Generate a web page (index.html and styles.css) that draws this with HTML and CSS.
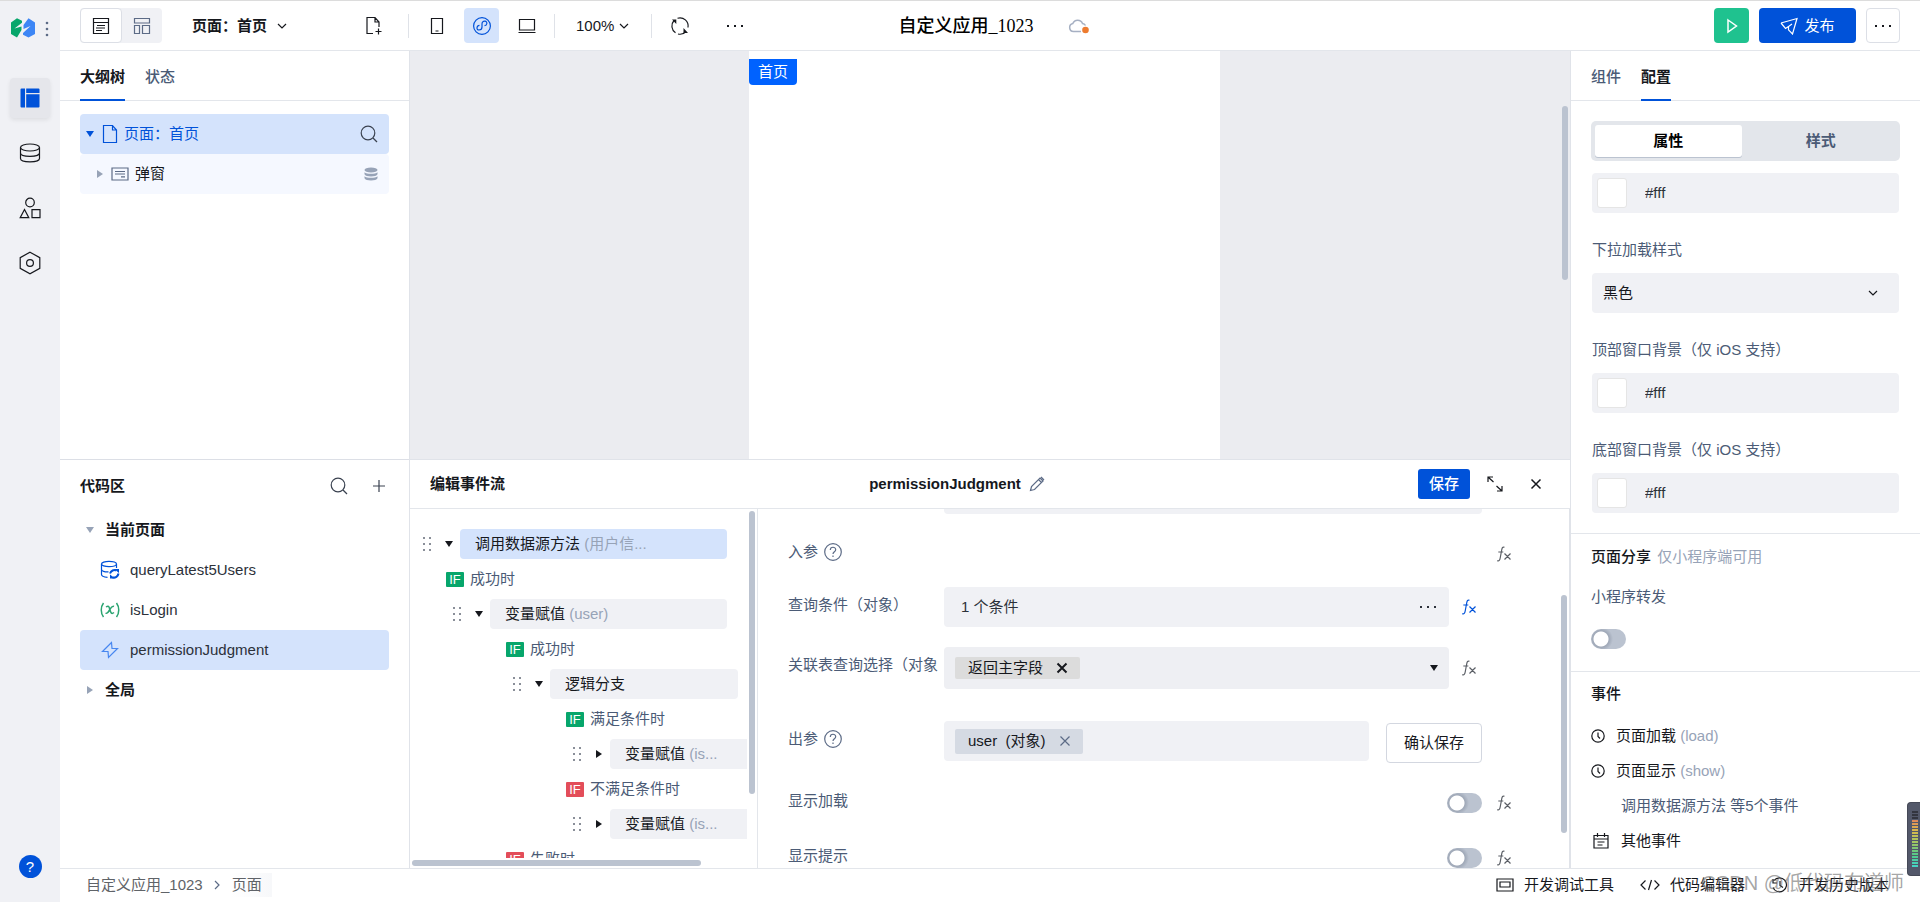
FILE: index.html
```html
<!DOCTYPE html>
<html lang="zh-CN">
<head>
<meta charset="utf-8">
<title>自定义应用_1023</title>
<link rel="stylesheet" href="styles.css">
</head>
<body>
<svg class="sprite" aria-hidden="true">
  <symbol id="i-search" viewBox="0 0 18 18"><circle cx="8" cy="8" r="6.8"/><path d="M13 13l4 4"/></symbol>
  <symbol id="i-chev" viewBox="0 0 10 10"><path d="M1 3l4 4 4-4"/></symbol>
  <symbol id="i-dots" viewBox="0 0 18 4"><path class="solid" d="M1 1h2v2H1zM8 1h2v2H8zM15 1h2v2h-2z"/></symbol>
  <symbol id="i-help" viewBox="0 0 20 20"><circle cx="10" cy="10" r="8.300"/><path d="M7.300 8c0-3.700 5.400-3.500 5.400-.3 0 2-2.700 2-2.700 4.200M10 13.600v1.500"/></symbol>
  <symbol id="i-fx" viewBox="0 0 16 16"><path d="M8.500 1.300C6.500.5 6 2 5.600 4.500L4.200 12c-.4 2.300-1.200 3.200-2.900 2.600M2.300 6h5M8.500 7.500l6 6M14.500 7.500l-6 6"/></symbol>
  <symbol id="i-down" viewBox="0 0 8 6"><path class="solid" d="M0 0h8L4 6z"/></symbol>
  <symbol id="i-right" viewBox="0 0 6 8"><path class="solid" d="M0 0v8l6-4z"/></symbol>
  <symbol id="i-grip" viewBox="0 0 8 16"><path class="solid" d="M0 1h2v2H0zM6 1h2v2H6zM0 7h2v2H0zM6 7h2v2H6zM0 13h2v2H0zM6 13h2v2H6z"/></symbol>
  <symbol id="i-x" viewBox="0 0 12 12"><path d="M1.500 1.500l9 9M10.500 1.500l-9 9"/></symbol>
  <symbol id="i-clock" viewBox="0 0 14 14"><circle cx="7" cy="7" r="6.200"/><path d="M7 3.500V7.500l2 2"/></symbol>
</svg>
<div class="app">
  <nav class="rail" aria-label="主导航">
    <div class="rail-brand">
      <svg width="24" height="20" viewBox="0 0 24 20"><path fill="#07a66b" d="M0 4.500L6 .3l5 2.500v2L3.500 10.500l7-2v3.500L6 19.500 0 16z"/><path fill="#3d86f5" d="M24 4.500L17.500.3 12.500 7v4l7-3-7.500 7v1.800l5.500 2.700 6.500-3.500z"/></svg>
      <svg class="muted" width="4" height="16" viewBox="0 0 4 16"><circle cx="2" cy="2" r="1.300"/><circle cx="2" cy="8" r="1.300"/><circle cx="2" cy="14" r="1.300"/></svg>
    </div>
    <button class="rail-btn is-on" aria-label="页面"><svg width="20" height="20" viewBox="0 0 20 20"><path fill="#0052d9" d="M1.500.5H5v19H1.500a1 1 0 01-1-1v-17a1 1 0 011-1zM6.200.5h12.300a1 1 0 011 1V5H6.200zM6.200 6.200h13.300v12.300a1 1 0 01-1 1H6.200z"/></svg></button>
    <button class="rail-btn" aria-label="数据源"><svg class="ic" width="22" height="20" viewBox="0 0 22 20"><ellipse cx="11" cy="4.500" rx="9.500" ry="3.500"/><path d="M1.500 4.500v11c0 4.500 19 4.500 19 0v-11M1.500 10c0 4.500 19 4.500 19 0"/></svg></button>
    <button class="rail-btn" aria-label="组件"><svg class="ic" width="22" height="22" viewBox="0 0 22 22"><circle cx="11" cy="5.500" r="4.300"/><path d="M5.500 12.500l4.300 8.200H1.200zM13 12.700h8v8h-8z"/></svg></button>
    <button class="rail-btn" aria-label="设置"><svg class="ic" width="22" height="24" viewBox="0 0 22 24"><path d="M11 1.200l9.800 5.400v10.800L11 22.800l-9.800-5.400V6.600z"/><circle cx="11" cy="12" r="3.400"/></svg></button>
    <button class="rail-help" aria-label="帮助">?</button>
  </nav>

  <div class="main">
    <header class="topbar">
      <div class="tools">
        <div class="view-switch">
          <button class="is-on" aria-label="编辑视图"><svg class="ic" width="18" height="18" viewBox="0 0 18 18"><path d="M1.500 1.500h15v15h-15zM1.500 5.500h15M5 8.500h8M4 11h9M4 13.500h6"/></svg></button>
          <button aria-label="布局视图"><svg class="ic muted" width="18" height="18" viewBox="0 0 18 18"><path d="M1.500 1.500h15v4.500h-15zM1.500 8.500h5v8h-5zM9.500 8.500h7v8h-7z"/></svg></button>
        </div>
        <button class="page-pick">页面：首页<svg class="ic" width="10" height="10"><use href="#i-chev"/></svg></button>
        <button class="tool new-page" aria-label="新建页面"><svg class="ic" width="18" height="20" viewBox="0 0 18 20"><path d="M8 17.500H2V1.500h8l4 4.500v5M10 1.500V6h4M13.500 12.500v6M10.500 15.500h6"/></svg></button>
        <span class="sep"></span>
        <button class="tool" aria-label="手机"><svg class="ic" width="14" height="18" viewBox="0 0 14 18"><path d="M1.500 1.500h11v15h-11zM5.500 14h3"/></svg></button>
        <button class="tool is-on" aria-label="小程序"><svg class="ic" width="20" height="20" viewBox="0 0 20 20"><circle cx="10" cy="10" r="8.400"/><path d="M7.500 9.300c-3 .2-3.500 4.700-.5 4.700 2 0 3-1.200 3-3V8c0-1.800 1-3 3-2.800 2.800.3 2.300 4.300-.5 4.500"/></svg></button>
        <button class="tool" aria-label="桌面"><svg class="ic" width="18" height="16" viewBox="0 0 18 16"><path d="M1.500 1.500h15v10.500h-15zM.5 14.500h17"/></svg></button>
        <span class="sep"></span>
        <button class="zoom">100%<svg class="ic" width="10" height="10"><use href="#i-chev"/></svg></button>
        <span class="sep"></span>
        <button class="tool refresh" aria-label="刷新"><svg class="ic" width="20" height="20" viewBox="0 0 20 20"><path d="M5.500 16.800A8.200 8.200 0 014 4.500M7.500 2.200A8.200 8.200 0 0118 11.500M16 15.500A8.200 8.200 0 018 18"/><path class="solid" d="M2 3.500h4.300v4.500zM13.500 12v5h4.500z"/></svg></button>
        <button class="tool" aria-label="更多"><svg class="ic" width="18" height="4"><use href="#i-dots"/></svg></button>
      </div>
      <div class="app-name"><h1>自定义应用_1023</h1>
        <svg width="22" height="16" viewBox="0 0 22 16"><path d="M13 13.500H5.500a4 4 0 01-.7-7.900A5.200 5.200 0 0114.500 5.500a4 4 0 013 2" fill="none" stroke="#a6b0c3" stroke-width="1.500"/><circle cx="17.500" cy="12" r="3.300" fill="#ed7b2f"/></svg>
      </div>
      <div class="actions">
        <button class="run" aria-label="预览"><svg width="12" height="16" viewBox="0 0 12 16"><path d="M2 2l8.500 6L2 14z" fill="none" stroke="#fff" stroke-width="1.500"/></svg></button>
        <button class="publish"><svg class="ic" width="18" height="18" viewBox="0 0 18 18"><path d="M1 6L17 1.500 12.500 17 8.500 12.800V9.500L12 7M1 6l4.500 5.500 3-2"/></svg>发布</button>
        <button class="more" aria-label="更多操作"><svg class="ic" width="18" height="4"><use href="#i-dots"/></svg></button>
      </div>
    </header>

    <div class="work">
      <aside class="left">
        <section class="outline">
          <div class="tabs"><button class="is-on">大纲树</button><button>状态</button></div>
          <div class="outline-tree">
            <div class="o-row is-on"><svg class="blue" width="8" height="6"><use href="#i-down"/></svg><svg class="ic blue" width="16" height="20" viewBox="0 0 16 20"><path d="M1.500 1.500h9l4 4.500v12.500h-13zM10.500 1.500V6h4"/></svg><span>页面：首页</span><button aria-label="搜索"><svg class="ic" width="18" height="18"><use href="#i-search"/></svg></button></div>
            <div class="o-row child"><svg class="grey" width="6" height="8"><use href="#i-right"/></svg><svg class="ic muted" width="18" height="14" viewBox="0 0 18 14"><path d="M1 1h16v12H1zM4 4.500h10M4 7h10M10 9.800h4"/></svg><span>弹窗</span><svg class="grey stack" width="14" height="14" viewBox="0 0 14 14"><ellipse class="solid" cx="7" cy="3" rx="6.500" ry="2.500"/><path class="solid" d="M.5 5.200c2 2 11 2 13 0v2c-1 3-12 3-13 0zM.5 9.200c2 2 11 2 13 0v2c-1 3-12 3-13 0z"/></svg></div>
          </div>
        </section>
        <section class="code">
          <div class="code-head"><h2>代码区</h2><button aria-label="搜索代码"><svg class="ic" width="18" height="18"><use href="#i-search"/></svg></button><button aria-label="新建"><svg class="ic" width="14" height="14" viewBox="0 0 14 14"><path d="M7 1v12M1 7h12"/></svg></button></div>
          <div class="c-row group"><svg class="grey" width="8" height="6"><use href="#i-down"/></svg>当前页面</div>
          <a class="c-row" href="#query"><svg class="ic blue" width="20" height="20" viewBox="0 0 20 20"><ellipse cx="9" cy="4" rx="7.500" ry="2.700"/><path d="M1.500 4v10.500c0 1.600 2.500 2.600 6 2.800M16.500 4v4M1.500 9.200c0 2 3 2.800 7 2.700"/><path stroke-width="2" d="M10 13.500c1-3 4-4 6-3M18.500 13.500c-.5 3-3 4.500-6 4"/><path class="solid" d="M14 9h5v4zM15 18.500h-5v-4z"/></svg>queryLatest5Users</a>
          <a class="c-row" href="#login"><svg class="ic green" width="20" height="16" viewBox="0 0 20 16"><path stroke-width="1.500" d="M3.500 1C.5 5 .5 11 3.500 15M16.500 1c3 4 3 10 0 14M6 5c3-2 3 0 4 3s1.500 4.500 4 2.500M14 4.500c-2-1-3 1-4.500 3.500S7 12 5.500 11"/></svg>isLogin</a>
          <a class="c-row is-on" href="#judge"><svg class="ic light-blue" width="18" height="18" viewBox="0 0 18 18"><path d="M10.500 1.500L1.500 10.500h5.500L7.500 16.500 16.500 7.500H11z"/></svg>permissionJudgment</a>
          <div class="c-row group"><svg class="grey" width="8" height="8"><use href="#i-right"/></svg>全局</div>
        </section>
      </aside>

      <div class="center">
        <div class="canvas"><div class="phone"><span class="page-tag">首页</span></div><i class="bar bar-canvas"></i></div>
        <section class="flow">
          <div class="flow-head">
            <h2>编辑事件流</h2>
            <div class="flow-name"><strong>permissionJudgment</strong><svg class="ic muted" width="16" height="16" viewBox="0 0 16 16"><path d="M1.500 14.500l1-4L11 2l3 3-8.500 8.500zM9.500 3.500l3 3M12 1l3 3"/></svg></div>
            <div class="flow-acts"><button class="save">保存</button><button aria-label="展开"><svg class="ic" width="18" height="18" viewBox="0 0 18 18"><path d="M2 7V2h5M2 2l5.500 5M16 11v5h-5M16 16l-5.500-5"/></svg></button><button aria-label="关闭"><svg class="ic bold" width="12" height="12"><use href="#i-x"/></svg></button></div>
          </div>
          <div class="flow-body">
            <div class="steps">
              <div class="steps-view">
                <div class="step l0"><svg class="grip" width="8" height="16"><use href="#i-grip"/></svg><svg width="8" height="6"><use href="#i-down"/></svg><span class="node is-on">调用数据源方法 <em>(用户信...</em></span></div>
                <div class="cond c0"><b>IF</b>成功时</div>
                <div class="step l1"><svg class="grip" width="8" height="16"><use href="#i-grip"/></svg><svg width="8" height="6"><use href="#i-down"/></svg><span class="node">变量赋值 <em>(user)</em></span></div>
                <div class="cond c1"><b>IF</b>成功时</div>
                <div class="step l2"><svg class="grip" width="8" height="16"><use href="#i-grip"/></svg><svg width="8" height="6"><use href="#i-down"/></svg><span class="node">逻辑分支</span></div>
                <div class="cond c2"><b>IF</b>满足条件时</div>
                <div class="step l3"><svg class="grip" width="8" height="16"><use href="#i-grip"/></svg><svg width="8" height="8"><use href="#i-right"/></svg><span class="node">变量赋值 <em>(is...</em></span></div>
                <div class="cond c2 fail"><b>IF</b>不满足条件时</div>
                <div class="step l3"><svg class="grip" width="8" height="16"><use href="#i-grip"/></svg><svg width="8" height="8"><use href="#i-right"/></svg><span class="node">变量赋值 <em>(is...</em></span></div>
                <div class="cond c1 fail"><b>IF</b>失败时</div>
              </div>
              <i class="bar bar-steps"></i><i class="bar bar-steps-h"></i>
            </div>
            <form class="params">
              <div class="params-view">
                <div class="field-end"></div>
                <div class="p-row p-in"><span class="p-label">入参<svg class="ic muted" width="20" height="20"><use href="#i-help"/></svg></span><span class="p-main"></span><button type="button" class="fx out" aria-label="表达式"><svg class="ic" width="16" height="16"><use href="#i-fx"/></svg></button></div>
                <div class="p-row p-query"><span class="p-label">查询条件（对象）</span><button type="button" class="field p-main">1 个条件<svg class="ic" width="18" height="4"><use href="#i-dots"/></svg></button><button type="button" class="fx" aria-label="表达式"><svg class="ic blue" width="16" height="16"><use href="#i-fx"/></svg></button></div>
                <div class="p-row p-join"><span class="p-label">关联表查询选择（对象</span><div class="field p-main"><span class="chip">返回主字段<svg class="ic heavy" width="12" height="12"><use href="#i-x"/></svg></span><svg class="drop" width="8" height="6"><use href="#i-down"/></svg></div><button type="button" class="fx" aria-label="表达式"><svg class="ic" width="16" height="16"><use href="#i-fx"/></svg></button></div>
                <div class="p-row p-out"><span class="p-label">出参<svg class="ic muted" width="20" height="20"><use href="#i-help"/></svg></span><div class="field p-main"><span class="chip blue-chip"><span>user&nbsp; (对象)</span><svg class="ic muted" width="12" height="12"><use href="#i-x"/></svg></span></div><button type="button" class="confirm">确认保存</button></div>
                <div class="p-row p-load"><label class="p-label" for="sw-load">显示加载</label><span class="p-main"></span><input id="sw-load" class="switch" type="checkbox"><button type="button" class="fx out" aria-label="表达式"><svg class="ic" width="16" height="16"><use href="#i-fx"/></svg></button></div>
                <div class="p-row p-tip"><label class="p-label" for="sw-tip">显示提示</label><span class="p-main"></span><input id="sw-tip" class="switch" type="checkbox"><button type="button" class="fx out" aria-label="表达式"><svg class="ic" width="16" height="16"><use href="#i-fx"/></svg></button></div>
              </div>
              <i class="bar bar-params"></i>
            </form>
          </div>
        </section>
      </div>

      <aside class="right">
        <div class="tabs"><button>组件</button><button class="is-on">配置</button></div>
        <div class="props">
          <div class="segment"><button class="is-on">属性</button><button>样式</button></div>
          <div class="color"><i></i><input type="text" value="#fff" aria-label="背景颜色"></div>
          <label class="prop-label" for="load-style">下拉加载样式</label>
          <div class="pick"><select id="load-style"><option>黑色</option></select><svg class="ic" width="10" height="10"><use href="#i-chev"/></svg></div>
          <label class="prop-label" for="top-bg">顶部窗口背景（仅 iOS 支持）</label>
          <div class="color"><i></i><input id="top-bg" type="text" value="#fff"></div>
          <label class="prop-label" for="bottom-bg">底部窗口背景（仅 iOS 支持）</label>
          <div class="color"><i></i><input id="bottom-bg" type="text" value="#fff"></div>
        </div>
        <div class="share"><h3>页面分享 <em>仅小程序端可用</em></h3><label for="sw-share">小程序转发</label><input id="sw-share" class="switch" type="checkbox"></div>
        <div class="events">
          <h3>事件</h3>
          <div class="event"><svg class="ic" width="14" height="14"><use href="#i-clock"/></svg><span>页面加载 <em>(load)</em></span></div>
          <div class="event"><svg class="ic" width="14" height="14"><use href="#i-clock"/></svg><span>页面显示 <em>(show)</em></span></div>
          <div class="event sub">调用数据源方法 等5个事件</div>
          <div class="event other"><svg class="ic" width="18" height="18" viewBox="0 0 18 18"><path d="M2 3.500h14V16H2zM2 7h14M5.500 1v4M12.500 1v4M5.500 10h7M5.500 13h5"/></svg><span>其他事件</span></div>
        </div>
      </aside>
    </div>

    <footer class="status">
      <nav class="crumbs"><a href="#app">自定义应用_1023</a><svg class="ic muted" width="8" height="10" viewBox="0 0 8 10"><path d="M2 1l4 4-4 4"/></svg><a class="last" href="#page">页面</a></nav>
      <div class="devtools">
        <button><svg class="ic" width="18" height="16" viewBox="0 0 18 16"><path d="M1 2h16v12H1zM4 5h10v5H4z"/></svg>开发调试工具</button>
        <button><svg class="ic" width="20" height="12" viewBox="0 0 20 12"><path d="M5.500 1.500L1 6l4.500 4.500M14.500 1.500L19 6l-4.500 4.500M11.500 1l-3 10"/></svg>代码编辑器</button>
        <button><svg class="ic" width="18" height="16" viewBox="0 0 18 16"><path d="M3 3.500a7 7 0 11-1 7M2 2v4h4M9 4v4.500l3 2"/></svg>开发历史版本</button>
      </div>
      <span class="watermark">CSDN @低代码布道师</span>
    </footer>
  </div>
  <div class="meter"><i></i></div>
</div>
</body>
</html>
```

FILE: styles.css
```css
* { box-sizing: border-box; }
body {
  margin: 0;
  font: 15px/20px "Liberation Sans", "Noto Sans CJK SC", sans-serif;
  color: #16181d;
  background: #fff;
}
button { font: inherit; color: inherit; background: none; border: 0; padding: 0; margin: 0; display: flex; align-items: center; justify-content: center; }
a { color: inherit; text-decoration: none; }
h1, h2, h3 { margin: 0; font-size: 15px; font-weight: 500; }
h2 { font-weight: 700; }
em { font-style: normal; color: #97a3b7; }
svg { flex: none; display: block; fill: currentColor; }
.sprite { position: absolute; width: 0; height: 0; }
.ic { fill: none; stroke: currentColor; stroke-width: 1.2; }
.ic .solid { stroke: none; }
.solid { fill: currentColor; stroke: none; }
.muted { color: #5c6b86; }
.grey { color: #97a3b7; }
.blue { color: #0052d9; }
.light-blue { color: #4787f0; }
.green { color: #2ba471; }
.bold { stroke-width: 1.5; }
.heavy { stroke-width: 2; }

.app { display: flex; height: 100vh; border-top: 1px solid #dcdcdc; position: relative; }

.rail { width: 60px; flex: none; background: #f0f1f5; display: flex; flex-direction: column; align-items: center; gap: 15px; padding-bottom: 24px; }
.rail-brand { height: 62px; padding-top: 17px; display: flex; align-items: flex-start; gap: 10px; }
.rail-brand svg + svg { margin-top: 3px; }
.rail-btn { width: 40px; height: 40px; border-radius: 4px; }
.rail-btn.is-on { background: #e5e6eb; box-shadow: 0 2px 4px rgba(0, 0, 0, .08); }
.rail-help { width: 23px; height: 23px; margin-top: auto; border-radius: 50%; background: #0052d9; color: #fff; }

.main { flex: 1; min-width: 0; display: flex; flex-direction: column; }

.topbar { height: 50px; flex: none; display: grid; grid-template-columns: 1fr auto 1fr; align-items: center; padding: 0 20px; border-bottom: 1px solid #e3e6eb; }
.tools, .actions, .app-name, .view-switch { display: flex; align-items: center; }
.view-switch { background: #f0f1f5; border-radius: 4px; }
.view-switch button { width: 40px; height: 35px; }
.view-switch .is-on { width: 42px; background: #fff; border: 1px solid #dcdfe6; border-radius: 4px; }
.page-pick { gap: 10px; margin-left: 30px; font-weight: 700; }
.tool { width: 35px; height: 35px; border-radius: 4px; }
.tool + .tool { margin-left: 10px; }
.tool.is-on { background: #d4e3fc; color: #0052d9; }
.tool.new-page { margin-left: 69px; margin-right: 17px; }
.sep { width: 1px; height: 24px; background: #dfe2e8; }
.sep + .tool { margin-left: 10px; }
.tool + .sep { margin-left: 10px; }
.new-page + .sep { margin-left: 0; }
.zoom { gap: 5px; margin: 0 22px 0 21px; }
.tool.refresh { margin-right: 10px; }
.app-name { gap: 34px; padding-left: 8px; }
.app-name h1 { font: 500 18px/24px "Liberation Serif", "Noto Sans CJK SC", serif; color: #000; }
.actions { justify-content: flex-end; gap: 10px; }
.actions button { height: 35px; border-radius: 4px; }
.run { width: 35px; background: #1fc28f; }
.publish { width: 97px; gap: 6px; background: #0052d9; color: #fff; }
.more { width: 34px; border: 1px solid #dcdfe6; }

.work { flex: 1; min-height: 0; display: flex; }
.tabs { height: 50px; display: flex; gap: 20px; padding: 0 20px; border-bottom: 1px solid #e3e6eb; flex: none; }
.tabs button { height: 50px; padding-top: 4px; border-bottom: 2px solid transparent; color: #4b5b76; font-weight: 500; }
.tabs .is-on { color: #16181d; border-color: #0052d9; font-weight: 700; }

.left { width: 350px; flex: none; display: flex; flex-direction: column; border-right: 1px solid #e0e3e9; }
.outline, .code { flex: 1 1 0; min-height: 0; }
.outline-tree { padding: 13px 20px; }
.o-row { height: 40px; display: flex; align-items: center; padding: 0 11px 0 6px; border-radius: 4px; background: #f5f8ff; }
.o-row.is-on { background: #d4e3fc; color: #0052d9; }
.o-row > .ic { margin: 0 6px 0 8px; }
.o-row button { margin-left: auto; color: #3a4250; }
.o-row.child { padding-left: 17px; }
.o-row .stack { margin-left: auto; }
.code { border-top: 1px solid #dcdfe6; padding: 0 20px; }
.code-head { height: 50px; padding-top: 2px; display: flex; align-items: center; }
.code-head h2 { flex: 1; }
.code-head button { margin-right: 3px; color: #3a4250; }
.code-head button + button { margin-left: 21px; }
.c-row { height: 40px; display: flex; align-items: center; gap: 10px; padding-left: 20px; border-radius: 4px; color: #2c313a; }
.c-row .ic { width: 20px; }
.c-row.is-on { background: #d4e3fc; }
.c-row.group { gap: 11px; padding-left: 6px; font-weight: 700; color: #16181d; }

.center { flex: 1; min-width: 0; display: flex; flex-direction: column; }
.canvas { flex: 1 1 0; min-height: 0; background: #ebecf0; display: flex; justify-content: center; position: relative; padding-right: 11px; }
.phone { width: 471px; background: #fff; padding-top: 8px; }
.page-tag { display: inline-block; padding: 3px 9px; background: #0062ff; color: #fff; border-radius: 0 0 4px 4px; }
.bar { position: absolute; border-radius: 3px; background: #bbc3d0; }
.bar-canvas { width: 6px; height: 174px; right: 2px; top: 55px; }

.flow { flex: 1 1 0; min-height: 0; display: flex; flex-direction: column; border-top: 1px solid #e0e3e9; background: #fff; }
.flow-head { height: 49px; flex: none; display: flex; align-items: center; justify-content: space-between; padding: 0 18px 0 20px; border-bottom: 1px solid #e3e6eb; }
.flow-name, .flow-acts { display: flex; align-items: center; }
.flow-name { gap: 8px; }
.flow-acts button { width: 32px; height: 30px; margin-left: 9px; }
.flow-acts .save { width: 52px; background: #0052d9; color: #fff; border-radius: 3px; font-weight: 500; }
.flow-body { flex: 1; min-height: 0; display: flex; }
.steps { width: 348px; flex: none; position: relative; border-right: 1px solid #e3e6eb; padding: 0 10px 10px 0; }
.steps-view { height: 100%; overflow: hidden; padding-top: 20px; display: flex; flex-direction: column; gap: 5px; }
.step, .cond { height: 30px; flex: none; display: flex; align-items: center; }
.step .grip { color: #8a8f99; margin-right: 14px; }
.l0 { padding: 0 20px 0 13px; }
.l1 { padding: 0 20px 0 43px; }
.l2 { padding: 0 9px 0 103px; }
.l3 { padding-left: 163px; }
.c0 { padding-left: 36px; }
.c1 { padding-left: 96px; }
.c2 { padding-left: 156px; }
.node { flex: 1; margin-left: 7px; height: 30px; line-height: 30px; padding-left: 15px; border-radius: 4px; background: #f0f1f5; white-space: nowrap; }
.node.is-on { background: #d4e3fc; }
.l3 .node { border-radius: 4px 0 0 4px; }
.cond { color: #4b5b76; }
.cond b { width: 18px; height: 15px; margin-right: 6px; background: #07a66b; color: #fff; border-radius: 1px; font: 13px/15px "Liberation Sans", sans-serif; text-align: center; }
.cond.fail b { background: #e34d59; }
.bar-steps { width: 6px; height: 283px; right: 2px; top: 2px; }
.bar-steps-h { height: 6px; width: 289px; left: 2px; bottom: 2px; }

.params { flex: 1; min-width: 0; position: relative; border-right: 1px solid #e0e3e9; }
.params-view { height: 100%; overflow: hidden; padding: 0 87px 0 30px; }
.field-end { height: 5px; margin-left: 156px; border-radius: 0 0 4px 4px; background: #f0f1f5; }
.p-row { display: flex; align-items: center; min-height: 40px; position: relative; }
.p-label { width: 156px; flex: none; align-self: flex-start; height: 36px; display: flex; align-items: center; gap: 5px; color: #4b5b76; white-space: nowrap; overflow: hidden; }
.p-main { flex: 1; min-width: 0; }
.p-in { margin-top: 20px; }
.p-query { margin-top: 13px; }
.p-join { margin-top: 20px; }
.p-out { margin-top: 32px; }
.p-load { margin-top: 20px; }
.p-tip { margin-top: 15px; }
.field { height: 40px; display: flex; align-items: center; justify-content: space-between; background: #f0f1f5; border-radius: 4px; padding: 0 12px 0 17px; color: #2c313a; }
div.field { padding: 0 11px; color: #16181d; }
.p-join .field { height: 42px; background: #eeeff3; }
.chip { height: 22px; padding: 0 12px 0 13px; display: flex; align-items: center; gap: 13px; background: #dcdcdc; border-radius: 2px; }
.chip.blue-chip { height: 25px; background: #d5dae3; }
.fx { width: 16px; margin-left: 12px; margin-right: 5px; color: #5b5f66; }
.fx.out { margin: 0 -30px 0 14px; }
.p-out { align-items: flex-end; }
.p-out .field { margin-bottom: 2px; }
.confirm { width: 96px; height: 40px; margin-left: 17px; border: 1px solid #d3d7e0; border-radius: 4px; }
.bar-params { width: 6px; height: 238px; right: 2px; bottom: 35px; }

.switch { appearance: none; width: 35px; height: 20px; margin: 0; border-radius: 10px; background: radial-gradient(circle at 10px 10px, #fff 7px, #9fa8b7 8px, #bbc3d0 12px); flex: none; display: block; }

.right { width: 350px; flex: none; border-left: 1px solid #e0e3e9; overflow: hidden; }
.props { padding: 20px; }
.segment { height: 40px; display: grid; grid-template-columns: 1fr 1fr; padding: 4px; margin-bottom: 12px; border-radius: 5px; background: #e3e6eb; }
.segment button { color: #4b5b76; font-weight: 700; border-radius: 3px; }
.segment .is-on { color: #000; background: #fff; box-shadow: 0 1px 0 #bbc3d0; margin-right: 4px; }
.color, .pick { height: 40px; margin: 0 1px; display: flex; align-items: center; border-radius: 4px; background: #f0f1f5; padding: 0 5px; position: relative; }
.color i { width: 30px; height: 30px; background: #fff; border: 1px solid #e5e5e5; border-radius: 3px; }
.color input { flex: 1; min-width: 0; margin-left: 18px; padding: 0; border: 0; background: none; font: inherit; color: #2c313a; }
.prop-label { display: block; padding: 27px 1px 13px; color: #4b5b76; white-space: nowrap; }
.pick select { appearance: none; flex: 1; border: 0; padding: 0 6px; background: none; font: inherit; color: #16181d; }
.pick svg { margin-right: 16px; }
.share { border-top: 1px solid #e3e6eb; border-bottom: 1px solid #e3e6eb; padding: 13px 20px 22px; }
.share h3 { margin-bottom: 20px; font-weight: 500; }
.share h3 em { font-weight: 400; margin-left: 2px; }
.share label { display: block; margin-bottom: 22px; color: #4b5b76; }
.events { padding: 12px 20px; }
.events h3 { margin-bottom: 14px; }
.event { height: 35px; display: flex; align-items: center; gap: 11px; }
.event.sub { padding-left: 30px; color: #4b5b76; }
.event.other svg { margin-left: 1px; }

.status { height: 34px; flex: none; display: flex; align-items: center; justify-content: space-between; padding: 0 31px 2px 26px; border-top: 1px solid #e3e6eb; position: relative; }
.crumbs, .devtools { display: flex; align-items: center; }
.crumbs { color: #5f6368; }
.crumbs svg { margin: 0 10px; }
.crumbs .last { padding: 2px 10px 2px 1px; background: linear-gradient(to right, #fff, #f7f8fa); }
.devtools { gap: 26px; }
.devtools button { gap: 10px; }
.watermark { position: absolute; right: 16px; top: 2px; font-size: 20px; line-height: 24px; color: rgba(90, 90, 90, .55); white-space: nowrap; }

.meter { position: absolute; right: 0; top: 801px; width: 13px; height: 74px; border-radius: 4px 0 0 4px; background: #53586a; border: 1px solid #454957; border-right: 0; padding: 8px 2px 8px 4px; }
.meter i { display: block; height: 100%; background: repeating-linear-gradient(transparent 0 2px, #53586a 2px 3px), linear-gradient(#33353f 16%, #e08a5a 17%, #d8b84c 35%, #a5c860 55%, #50c88c 80%, #45d6c8); }
```
